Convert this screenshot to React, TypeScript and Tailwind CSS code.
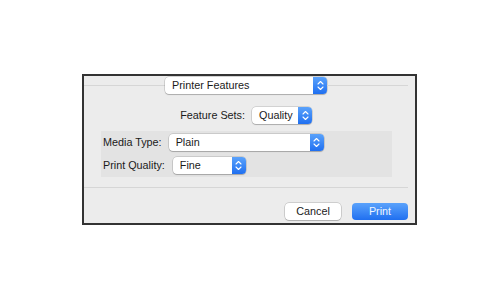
import React from "react";

function Chevrons() {
  return (
    <svg width="7" height="11" viewBox="0 0 7 11" fill="none">
      <path d="M1 4 L3.5 1.5 L6 4" stroke="white" strokeWidth="1.1" strokeLinecap="round" strokeLinejoin="round" />
      <path d="M1 7 L3.5 9.5 L6 7" stroke="white" strokeWidth="1.1" strokeLinecap="round" strokeLinejoin="round" />
    </svg>
  );
}

function Popup({ text, w }: { text: string; w: string }) {
  return (
    <div
      className={`${w} h-[17px] flex items-stretch rounded-[4px] bg-white shadow-[0_0_0_0.5px_rgba(0,0,0,0.22),0_1px_1px_rgba(0,0,0,0.18)] shrink-0`}
    >
      <div className="flex-1 flex items-center pl-[7px] text-[10.8px] text-[#1a1a1a] leading-none">{text}</div>
      <div className="w-[14px] rounded-r-[4px] bg-gradient-to-b from-[#5aa2fb] to-[#1f6ff0] flex items-center justify-center">
        <Chevrons />
      </div>
    </div>
  );
}

export default function App() {
  return (
    <div
      className="w-[500px] h-[300px] bg-white overflow-hidden"
      style={{ fontFamily: '"Liberation Sans", Arial, sans-serif' }}
    >
      <div className="mt-[74px] ml-[82px] w-[335px] h-[151px] border-2 border-[#333333] bg-[#ececec] flex flex-col">
        <div className="mt-[1px] h-[17px] flex items-center pr-[7px]">
          <div className="flex-1 h-px bg-[#d6d6d6]" />
          <Popup text="Printer Features" w="w-[162px]" />
          <div className="flex-1 h-px bg-[#d6d6d6]" />
        </div>
        <div className="mt-[13px] h-[17px] flex items-center pl-[76px] gap-[7px]">
          <div className="w-[85px] text-right text-[10.8px] text-[#1a1a1a]">Feature Sets:</div>
          <Popup text="Quality" w="w-[60px]" />
        </div>
        <div className="mt-[7px] ml-[17px] w-[291px] h-[46px] bg-[#e3e3e3] pt-[3px] pl-[2px] flex flex-col gap-[6px]">
          <div className="h-[17px] flex items-center gap-[7px]">
            <div className="text-[10.8px] text-[#1a1a1a]">Media Type:</div>
            <Popup text="Plain" w="w-[155px]" />
          </div>
          <div className="h-[17px] flex items-center gap-[8px]">
            <div className="text-[10.8px] text-[#1a1a1a]">Print Quality:</div>
            <Popup text="Fine" w="w-[73px]" />
          </div>
        </div>
        <div className="mt-[10px] mr-[7px] h-px bg-[#d6d6d6]" />
        <div className="mt-[15px] h-[17px] flex justify-end gap-[11px] pr-[7px]">
          <div className="w-[56px] h-[17px] rounded-[4px] bg-white shadow-[0_0_0_0.5px_rgba(0,0,0,0.25),0_1px_1px_rgba(0,0,0,0.15)] flex items-center justify-center text-[10.8px] text-[#1a1a1a]">
            Cancel
          </div>
          <div className="w-[56px] h-[17px] rounded-[4px] bg-gradient-to-b from-[#5aa2fb] to-[#1f6ff0] flex items-center justify-center text-[10.8px] text-[#eef5ff]">
            Print
          </div>
        </div>
      </div>
    </div>
  );
}
